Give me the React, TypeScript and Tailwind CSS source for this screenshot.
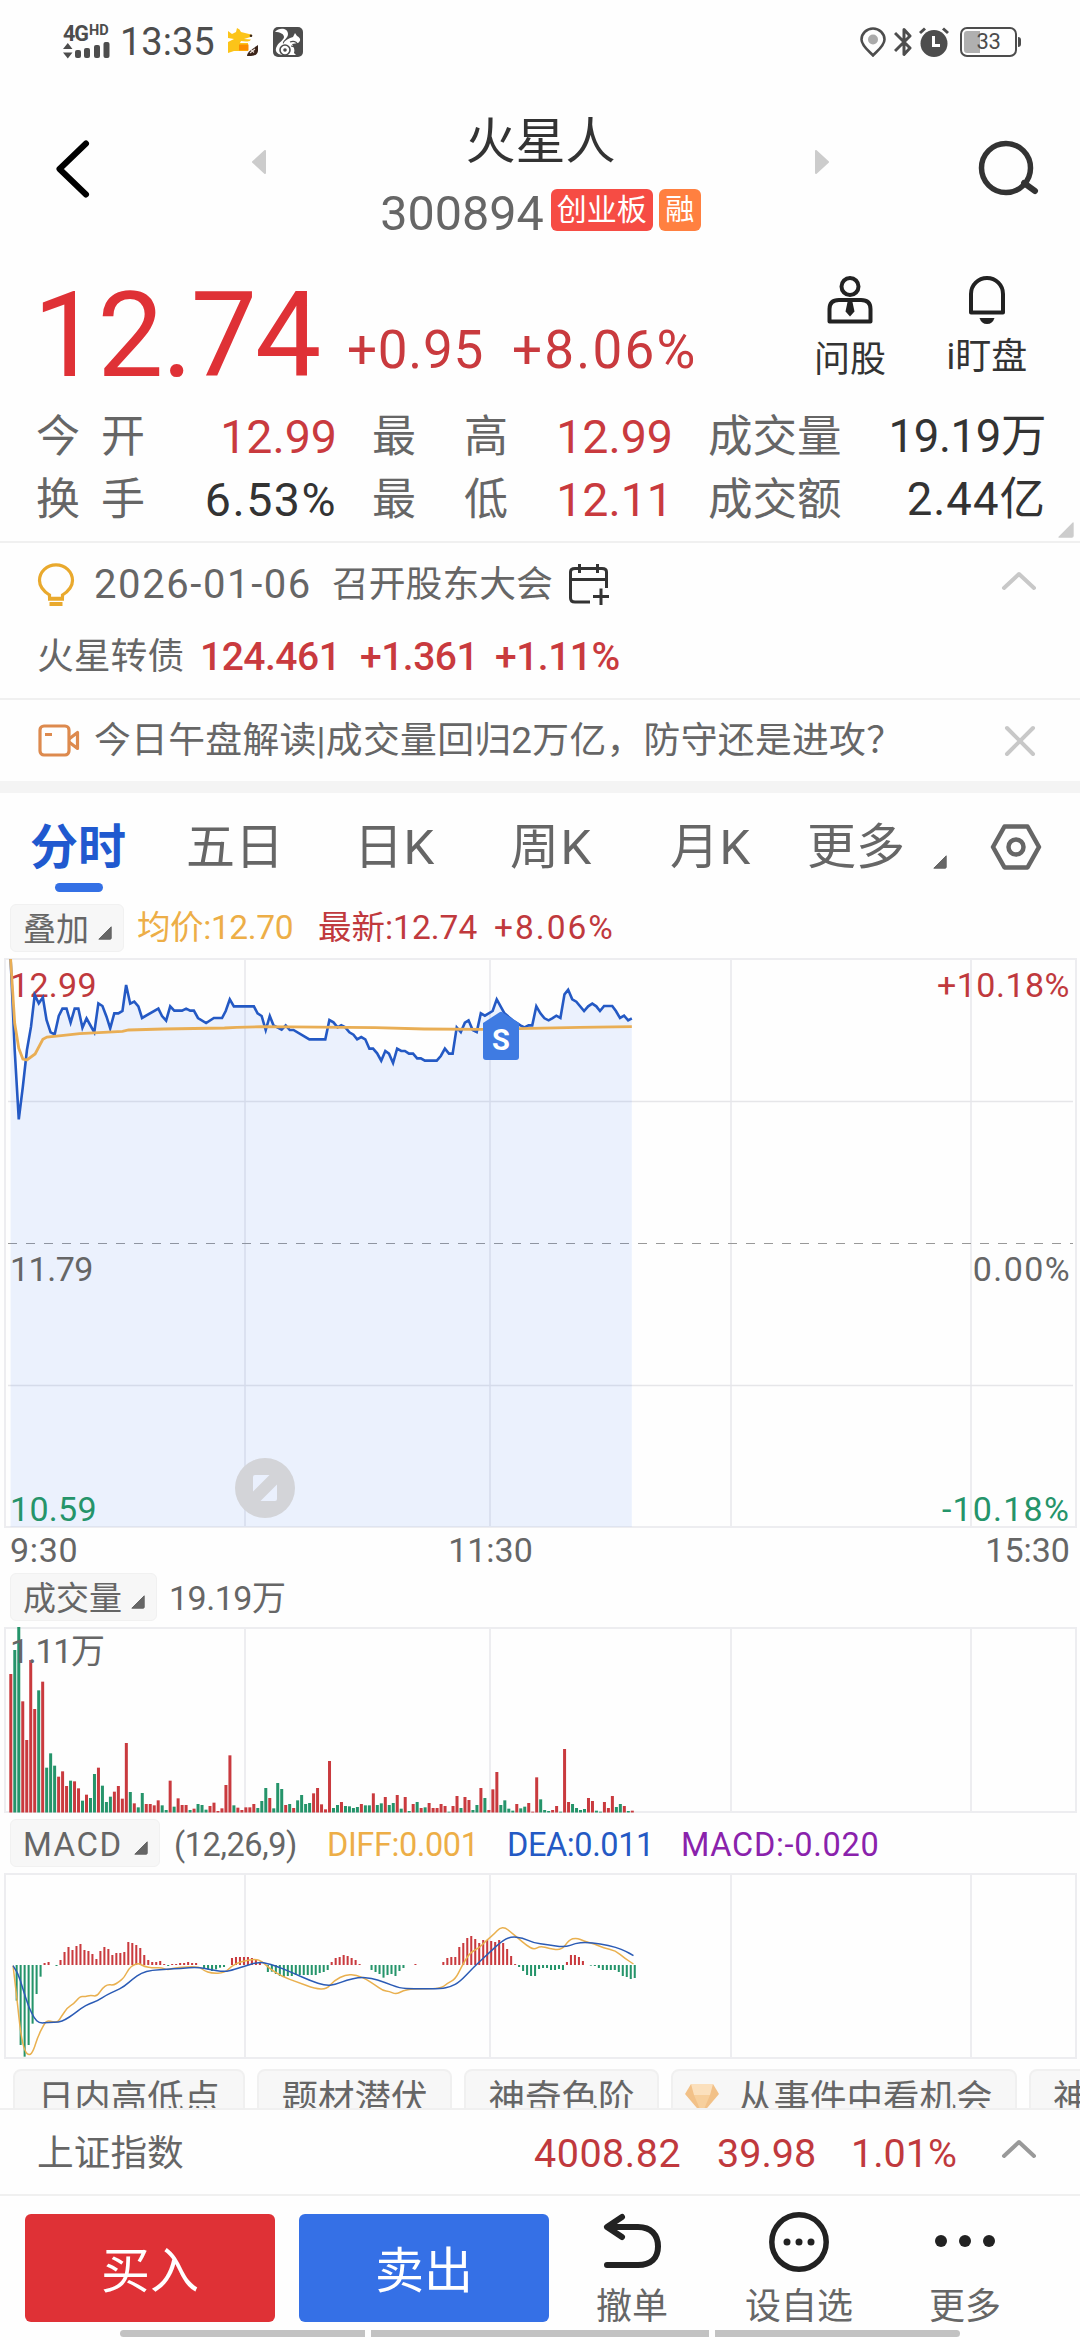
import React from "react";

const RED = "#c93a3e";
const GREEN = "#25946a";
const GRID = "#ededf0";

/* One-minute price line, in the unit space of the plot (2.45 x 3 per pixel). */
const PRICE =
  "26,57 36,330 46,538 56,440 66,330 76,260 85,165 95,190 105,172 114,240 124,277 134,283 144,228 153,206 163,206 173,248 183,206 192,206 202,263 212,235 221,255 231,277 241,190 251,198 261,230 270,265 280,220 290,220 300,213 309,135 319,191 329,185 339,199 348,234 388,206 397,228 407,242 417,199 427,212 446,212 456,206 466,212 475,212 485,234 505,249 524,234 544,234 553,213 563,178 573,199 622,199 631,220 641,228 651,270 661,228 670,256 690,269 700,256 710,270 719,270 758,298 797,298 807,240 817,247 827,262 836,256 846,262 856,277 866,284 875,298 885,291 895,298 905,326 914,326 924,340 934,362 944,333 953,341 963,369 973,326 983,333 992,333 1002,341 1012,341 1022,355 1031,355 1041,362 1070,362 1080,348 1090,326 1100,341 1109,341 1119,262 1129,276 1139,248 1148,241 1158,270 1168,276 1178,220 1188,227 1207,213 1217,178 1236,220 1256,241 1275,256 1285,262 1295,256 1304,256 1314,199 1324,220 1334,235 1344,241 1353,235 1363,227 1373,234 1383,163 1392,149 1402,178 1412,185 1431,213 1441,199 1451,191 1461,199 1470,213 1480,198 1500,198 1509,213 1519,234 1529,227 1539,241 1548,235";

const AVERAGE =
  "26,57 36,250 46,325 56,357 66,360 86,342 105,298 115,291 150,287 195,281 300,274 315,270 400,267 550,264 580,262 640,260 920,263 1040,267 1180,268 1300,265 1420,262 1548,260";

/* Bar tops of the volume plot, base line at 578; a leading minus marks a falling minute. */
const VOLUME = [
  162, -90, -20, 244, 360, 120, 267, -211, 185, -443, -400, -437, 470, 454, 498, -482, 484, 505, -542, 524,
  -534, -462, 443, -497, -546, -530, 515, 498, 536, 369, -516, 550, -562, -519, 552, 552, 556, 541, -556, -570,
  482, -560, 535, 555, 555, -570, 566, -552, -555, -569, 558, 548, 573, 565, 495, 406, -556, 563, 570, 562,
  562, 552, -564, -543, -504, 534, -565, -489, -507, 555, -552, 564, -541, -525, -552, -549, 520, 504, 553, 568,
  423, -564, -555, 546, -558, -559, -564, -561, 552, -556, -556, 520, -555, -550, 531, -555, -549, 525, -566, 531,
  -573, 552, -546, 564, -562, 549, 564, 564, 552, 558, -575, 558, 528, -564, 531, 540, -570, -555, 504, -534,
  570, 508, 456, -555, -541, -566, -572, 552, -565, -560, 549, 575, 472, -538, -570, -573, 570, 558, -575, 387,
  546, -552, -564, -570, -567, 534, 543, -572, -575, 546, 564, 528, -561, -552, 558, -573, 572,
];

/* MACD histogram ends, zero line at 315. */
const HISTOGRAM = [
  422, 555, 590, 555, 491, 402, 350, 309, 306, 315, 318, 300, 276, 261, 270, 258, 252, 270, 273, 282, 297, 273,
  261, 267, 285, 279, 279, 276, 246, 249, 255, 264, 285, 300, 306, 306, 303, 312, 318, 312, 312, 309, 309, 306,
  309, 309, 315, 324, 328, 333, 328, 323, 321, 315, 294, 291, 291, 291, 291, 294, 300, 308, 315, 336, 335, 342,
  348, 351, 348, 348, 345, 345, 345, 345, 345, 345, 339, 336, 330, 306, 294, 291, 285, 288, 294, 300, 312, 315,
  315, 330, 336, 342, 353, 345, 342, 348, 333, 324, 315, 315, 312, 315, 315, 315, 315, 315, 315, 306, 294, 291,
  291, 261, 249, 234, 228, 237, 249, 240, 240, 243, 246, 240, 249, 267, 288, 312, 321, 333, 345, 348, 348, 327,
  324, 324, 330, 330, 327, 330, 306, 285, 285, 291, 303, 315, 317, 318, 324, 330, 330, 330, 330, 336, 348, 351,
  357, 354,
];

const DIFF: [number, number][] = [
  [32, 317], [41, 410], [51, 525], [61, 575], [72, 587], [82, 572], [92, 532], [108, 492], [116, 481], [130, 486], [142, 486], [150, 470],
  [166, 442], [180, 432], [196, 409], [208, 410], [221, 406], [238, 409], [250, 385], [264, 373], [278, 376], [292, 365], [304, 353],
  [316, 325], [328, 314], [340, 310], [354, 320], [374, 324], [396, 323], [411, 330], [430, 323], [486, 319], [500, 332], [518, 340],
  [550, 339], [568, 318], [590, 304], [626, 297], [642, 304], [660, 325], [690, 349], [730, 367], [772, 386], [800, 388], [818, 362],
  [848, 343], [874, 346], [896, 357], [918, 374], [938, 392], [954, 394], [970, 403], [988, 392], [1010, 387], [1080, 386], [1096, 370],
  [1116, 357], [1130, 322], [1150, 279], [1174, 264], [1190, 243], [1212, 221], [1224, 204], [1238, 203], [1252, 217], [1270, 235],
  [1290, 256], [1308, 269], [1324, 258], [1346, 266], [1376, 271], [1394, 240], [1412, 233], [1432, 244], [1458, 252], [1478, 264],
  [1508, 272], [1530, 294], [1552, 312],
];
const DEA: [number, number][] = [
  [32, 317], [44, 338], [56, 386], [70, 440], [84, 475], [96, 490], [120, 487], [144, 487], [160, 479], [180, 463], [200, 444], [220, 430],
  [238, 423], [262, 404], [282, 393], [304, 380], [326, 356], [346, 339], [372, 330], [410, 328], [440, 325], [486, 321], [518, 330],
  [546, 335], [566, 332], [600, 318], [626, 309], [642, 307], [670, 315], [720, 340], [760, 362], [798, 377], [820, 374], [850, 360],
  [880, 352], [910, 354], [940, 366], [980, 385], [1010, 386], [1080, 387], [1104, 380], [1126, 366], [1160, 322], [1196, 281], [1228, 245],
  [1250, 230], [1280, 233], [1308, 249], [1340, 254], [1384, 262], [1410, 250], [1434, 247], [1470, 251], [1510, 262], [1534, 274], [1552, 287],
];

function smooth(points: [number, number][]) {
  let d = `M${points[0][0]},${points[0][1]}`;
  for (let i = 1; i < points.length - 1; i++) {
    const [x, y] = points[i];
    const [nx, ny] = points[i + 1];
    d += ` Q${x},${y} ${(x + nx) / 2},${(y + ny) / 2}`;
  }
  const last = points[points.length - 1];
  return `${d} L${last[0]},${last[1]}`;
}

function Grid({ height, rows = [] }: { height: number; rows?: number[] }) {
  return (
    <g stroke={GRID} strokeWidth="2" fill="none">
      <rect x="5" y="1" width="1071" height={height - 2} />
      {[245, 490, 731, 971].map((x) => (
        <path key={x} d={`M${x} 1V${height - 1}`} />
      ))}
      {rows.map((y) => (
        <path key={y} d={`M8 ${y}H1073`} stroke="#e6e6e9" strokeWidth="1.300" />
      ))}
    </g>
  );
}

function Corner({ size = 14, color = "#666", className = "" }: { size?: number; color?: string; className?: string }) {
  return (
    <svg className={`shrink-0 ${className}`} width={size} height={size} viewBox="0 0 14 14">
      <path d="M13.2 .8V12.2q0 1-1 1H.8z" fill={color} stroke={color} strokeWidth="1" strokeLinejoin="round" />
    </svg>
  );
}

function Chevron({ color, className = "" }: { color: string; className?: string }) {
  return (
    <svg className={`shrink-0 ${className}`} width="36" height="22" viewBox="0 0 36 22">
      <path d="M3 18 18 4 33 18" fill="none" stroke={color} strokeWidth="4" strokeLinecap="round" strokeLinejoin="round" />
    </svg>
  );
}

function StatusBar() {
  return (
    <div className="flex h-[84px] shrink-0 items-center pl-[63px] text-[#4d4d4d]">
      <div className="flex h-[34px] w-[57px] flex-col justify-between">
        <div className="flex h-[16px] items-start font-bold">
          <span className="w-[26px] text-[21.500px] leading-[18px] tracking-[-1.2px]">4G</span>
          <span className="text-[14.500px] leading-[12px]">HD</span>
        </div>
        <svg width="47" height="17" viewBox="0 0 47 17" fill="#4d4d4d">
          <path d="M0 7 4.8 1 9.5 7zM0 10.500H9.500L4.800 16.500z" />
          <rect x="12" y="8" width="6" height="8" rx="2" />
          <rect x="21" y="6" width="6" height="10" rx="2" />
          <rect x="31" y="3" width="6" height="13" rx="2" />
          <rect x="40.500" y="0" width="6" height="16" rx="2" />
        </svg>
      </div>
      <span className="w-[108px] text-[38px] leading-none">13:35</span>
      <svg className="w-[31px]" height="30" viewBox="0 0 31 30">
        <path d="M0 4 4 7 8 5 9 1Q12 2 13 5L21 7Q24 7 24 9.500L16 12 23 12.500Q22 15 18 14.500L13 14 12 16H20V24H6L0 26V15L6 12 0 11z" fill="#fcc419" />
        <path d="M11 17.500h9.500v6H11z" fill="#fb8c00" />
        <circle cx="23" cy="8.800" r="1.300" fill="#3b2415" />
        <path d="M30 18v6q-1 5-7 5h-4q0-3 4-6z" fill="#3b2419" />
        <path d="M22 26l5-4M23 22.500l3 3" stroke="#e9ddd5" strokeWidth="1.200" />
      </svg>
      <svg className="ml-[14px]" width="30" height="30" viewBox="0 0 30 30">
        <rect width="30" height="30" rx="5" fill="#4d4d4d" />
        <path d="M2 5C6 0 15 1 15 7c0 5-6 6-5 10 2-4 6-6 10-7l2-4 2 3c4 2 4 5 1 7l-6 1c2 3 3 6 2 9l2 2H9C4 27 1 24 4 19c2-4 7-6 7-9 0-3-4-5-9-5z" fill="#fff" />
        <circle cx="12" cy="23" r="5" fill="none" stroke="#4d4d4d" strokeWidth="1.600" />
        <circle cx="12" cy="23" r="1.800" fill="#4d4d4d" />
        <path d="M17 15c5-2 8 1 9 5M18 19c3 0 4 1 5 3" stroke="#4d4d4d" strokeWidth="1.200" fill="none" />
      </svg>
      <svg className="ml-[557px]" width="26" height="30" viewBox="0 0 26 30">
        <path d="M13 28.500C10 25 1.500 19 1.500 12.500a11.500 11 0 0 1 23 0C24.500 19 16 25 13 28.500z" fill="none" stroke="#4d4d4d" strokeWidth="2.600" />
        <circle cx="13" cy="12.500" r="5" fill="#aaa" />
      </svg>
      <svg className="ml-[8px]" width="18" height="30" viewBox="0 0 18 30">
        <path d="M1 6 16 21 10 27.500V2.500L16 9 1 24" fill="none" stroke="#4d4d4d" strokeWidth="3" strokeLinejoin="round" />
      </svg>
      <svg className="ml-[7px]" width="30" height="30" viewBox="0 0 30 30">
        <circle cx="15" cy="16.500" r="13.500" fill="#4d4d4d" />
        <path d="M1 6 6 1.500M24 1.500 29 6" stroke="#4d4d4d" strokeWidth="3" />
        <path d="M14.500 9v9.500H21" fill="none" stroke="#fff" strokeWidth="3" />
      </svg>
      <div className="relative ml-[11px] flex h-[30px] w-[57px] items-center justify-center rounded-[7px] border-[2.5px] border-[#4d4d4d]">
        <span className="absolute top-[1.5px] left-[1.5px] h-[22px] w-[16px] rounded-l-[3px] bg-[#b0b0b0]" />
        <span className="relative text-[22px] leading-none tracking-[-0.3px]">33</span>
      </div>
      <span className="ml-[1px] h-[10px] w-[2.5px] rounded-r bg-[#4d4d4d]" />
    </div>
  );
}

function Header() {
  return (
    <div className="flex h-[170px] shrink-0 justify-between pr-[40px] pl-[55px]">
      <svg className="mt-[55px]" width="36" height="60" viewBox="0 0 36 60">
        <path d="M31 4.500 4.500 30 31 55.500" fill="none" stroke="#000" strokeWidth="6" strokeLinecap="round" strokeLinejoin="round" />
      </svg>
      <div className="ml-[12px] flex w-[578px] justify-between">
        <svg className="mt-[66px]" width="14" height="24" viewBox="0 0 14 24">
          <path d="M13 1V23L1 12z" fill="#ccc" stroke="#ccc" strokeWidth="2" strokeLinejoin="round" />
        </svg>
        <div className="flex flex-col items-center pt-[28px]">
          <span className="h-[58px] text-[50px] leading-[61px] text-[#333]">火星人</span>
          <div className="mt-[19px] flex h-[42px] items-start">
            <span className="mr-[7px] text-[48.500px] leading-[50px] text-[#666]">300894</span>
            <span className="mr-[6px] flex h-[42px] w-[102px] items-center justify-center rounded-[6px] bg-[#f64c44] text-[30px] leading-[44px] text-white">创业板</span>
            <span className="flex h-[42px] w-[42px] items-center justify-center rounded-[6px] bg-[#ff8040] text-[29px] leading-[44px] text-white">融</span>
          </div>
        </div>
        <svg className="mt-[66px]" width="14" height="24" viewBox="0 0 14 24">
          <path d="M1 1V23L13 12z" fill="#ccc" stroke="#ccc" strokeWidth="2" strokeLinejoin="round" />
        </svg>
      </div>
      <svg className="mt-[56px]" width="62" height="58" viewBox="0 0 62 58">
        <circle cx="28" cy="28" r="24.500" fill="none" stroke="#333" strokeWidth="5.500" />
        <path d="M46 43 57 51" stroke="#333" strokeWidth="6" strokeLinecap="round" />
      </svg>
    </div>
  );
}

function Quote() {
  return (
    <div className="flex h-[287px] shrink-0 flex-col">
      <div className="flex h-[151px] items-start pl-[33px]">
        <span className="mt-[32px] w-[314px] text-[118px] leading-[100px] tracking-[-2px] text-[#df3136]">12.74</span>
        <span className="mt-[70px] w-[165px] text-[53px] leading-[52px] tracking-[.700px] text-[#c93a3e]">+0.95</span>
        <span className="mt-[70px] w-[302px] text-[53px] leading-[52px] tracking-[2.200px] text-[#c93a3e]">+8.06%</span>
        <div className="flex w-[72px] flex-col items-center text-[#333]">
          <svg className="mt-[21px]" width="48" height="50" viewBox="0 0 48 50" fill="none" stroke="#222" strokeWidth="4">
            <circle cx="24" cy="11.500" r="8.500" />
            <path d="M3.500 46.500V34Q3.500 25 13 25H35Q44.500 25 44.500 34V46.500z" strokeLinejoin="round" />
            <path d="M21.500 27h5l2 9.500-4.500 5-4.500-5z" fill="#222" stroke="none" />
          </svg>
          <span className="mt-[18px] text-[36px] leading-[34px]">问股</span>
        </div>
        <div className="ml-[56px] flex w-[90px] flex-col items-center text-[#333]">
          <svg className="mt-[21px]" width="40" height="50" viewBox="0 0 40 50">
            <path d="M4 37.500V19a16 16 0 0 1 32 0V37.500z" fill="none" stroke="#222" strokeWidth="4" strokeLinejoin="round" />
            <path d="M12.500 43h15q-2 6-7.500 6t-7.500-6z" fill="#222" />
          </svg>
          <span className="mt-[15px] text-[36px] leading-[34px] whitespace-nowrap">i盯盘</span>
        </div>
      </div>
      <StatRow a="今开" av="12.99" b="最高" bv="12.99" c="成交量" cv="19.19万" />
      <StatRow a="换手" av="6.53%" b="最低" bv="12.11" c="成交额" cv="2.44亿" dark />
      <Corner size={16} color="#ccc" className="-mt-[9px] ml-[1058px]" />
    </div>
  );
}

function StatRow({ a, av, b, bv, c, cv, dark }: { a: string; av: string; b: string; bv: string; c: string; cv: string; dark?: boolean }) {
  return (
    <div className="flex h-[63px] shrink-0 items-center pr-[34px] pl-[36px] text-[44px] leading-[62px] text-[#666]">
      <span className="flex w-[109px] justify-between"><i className="not-italic">{a[0]}</i><i className="not-italic">{a[1]}</i></span>
      <span className={`w-[192px] text-right text-[46.500px] ${dark ? "tracking-[1.500px] text-[#333]" : "text-[#c93a3e]"}`}>{av}</span>
      <span className="ml-[35px] flex w-[136px] justify-between"><i className="not-italic">{b[0]}</i><i className="not-italic">{b[1]}</i></span>
      <span className="w-[165px] text-right text-[46.500px] text-[#c93a3e]">{bv}</span>
      <span className="ml-[35px] text-[44.500px]">{c}</span>
      <span className={`ml-auto text-[45.500px] text-[#333] ${dark ? "tracking-[1px]" : "tracking-[-.400px]"}`}>{cv}</span>
    </div>
  );
}

function Events() {
  return (
    <>
      <div className="flex h-[157px] shrink-0 flex-col border-t-2 border-[#f0f0f0] text-[36.800px] text-[#666]">
        <div className="flex h-[84px] items-center pr-[43px] pl-[37px]">
          <svg width="38" height="44" viewBox="0 0 38 44" fill="none" stroke="#e9a92d" strokeWidth="3.200">
            <path d="M12.500 34.500V32C7 28.500 2.500 24 2.500 17.500a16.300 15.500 0 0 1 33 0C35.500 24 31 28.500 25.500 32v2.500" />
            <path d="M11 35.800h16M12.500 41h13" strokeWidth="4" />
          </svg>
          <span className="ml-[19px] w-[238px] text-[40px] tracking-[1.600px]">2026-01-06</span>
          <span>召开股东大会</span>
          <svg className="ml-[15px]" width="42" height="42" viewBox="0 0 42 42" fill="none" stroke="#333" strokeWidth="3">
            <path d="M22 38H7Q2.500 38 2.500 34V8Q2.500 4.500 7 4.500H34Q38.500 4.500 38.500 8V24M2.500 15.500H38.500M11.500 0V9M29.500 0V9M25 32.500H41M33 24.500V41" />
          </svg>
          <span className="flex-1" />
          <Chevron color="#c8c8c8" className="mb-[8px]" />
        </div>
        <div className="flex h-[60px] items-center pl-[37px]">
          <span className="w-[163px]">火星转债</span>
          <span className="w-[160px] text-[39px] font-medium tracking-[-0.500px] text-[#c93a3e]">124.461</span>
          <span className="w-[135px] text-[39px] font-medium tracking-[-0.500px] text-[#c93a3e]">+1.361</span>
          <span className="text-[39px] font-medium tracking-[-0.500px] text-[#c93a3e]">+1.11%</span>
        </div>
      </div>
      <div className="flex h-[83px] shrink-0 items-center border-t-2 border-[#f0f0f0] pr-[44px] pl-[38px] text-[#666]">
        <svg width="42" height="33" viewBox="0 0 42 33" fill="none" stroke="#dd8a4e" strokeWidth="3.200" strokeLinejoin="round">
          <rect x="2" y="2" width="29" height="29" rx="4" />
          <path d="M31 15 39.500 8.500V24.500L31 18M7 10.500h7" />
        </svg>
        <span className="ml-[14px] flex-1 text-[36.800px] tracking-[.300px]">今日午盘解读|成交量回归2万亿，防守还是进攻？</span>
        <svg width="32" height="32" viewBox="0 0 32 32">
          <path d="M3 3 29 29M29 3 3 29" stroke="#c8c8c8" strokeWidth="4" strokeLinecap="round" />
        </svg>
      </div>
      <div className="h-[12px] shrink-0 bg-[#f4f4f4]" />
    </>
  );
}

function Tabs() {
  return (
    <div className="flex h-[105px] shrink-0 items-start pt-[22px] pl-[30px] text-[49px] leading-[66px] whitespace-nowrap text-[#666]">
      <div className="flex w-[156px] flex-col font-bold text-[#2059cf]">
        <span className="text-[48px]">分时</span>
        <span className="mt-[2px] ml-[25px] h-[9px] w-[48px] rounded-full bg-[#3470e5]" />
      </div>
      <span className="w-[168px]">五日</span>
      <span className="w-[156px] tracking-[.5px]">日K</span>
      <span className="w-[160px] tracking-[1.500px]">周K</span>
      <span className="w-[137px] tracking-[.5px]">月K</span>
      <span className="w-[126px]">更多</span>
      <Corner className="mt-[40px]" />
      <svg className="mt-[8px] ml-[43px]" width="52" height="48" viewBox="0 0 52 48" fill="none" stroke="#666" strokeWidth="4.500">
        <path d="M14.500 3.500H37.500L49 24 37.500 44.500H14.500L3 24z" strokeLinejoin="round" />
        <circle cx="26" cy="24" r="7.500" />
      </svg>
    </div>
  );
}

function Picker({ label, className }: { label: string; className: string }) {
  return (
    <div className={`flex h-[48px] shrink-0 items-center justify-between rounded-[6px] border border-[#f1f1f1] bg-[#f7f7f7] pr-[11px] pl-[12px] text-[33px] leading-[46px] text-[#666] ${className}`}>
      <span className="pt-[3px]">{label}</span>
      <Corner className="mt-[9px]" />
    </div>
  );
}

function PriceChart() {
  return (
    <>
      <div className="flex h-[60px] shrink-0 items-center pl-[10px] text-[33.500px] leading-[48px] whitespace-nowrap">
        <Picker label="叠加" className="w-[114px]" />
        <span className="ml-[13px] w-[181px] tracking-[-.4px] text-[#edae47]">均价:12.70</span>
        <span className="w-[176px] text-[#c0393d]">最新:12.74</span>
        <span className="tracking-[2px] text-[#c0393d]">+8.06%</span>
      </div>
      <div className="relative h-[570px] shrink-0 text-[34px] leading-[34px]">
        <svg className="block" width="1080" height="570" viewBox="0 0 1080 570">
          <Grid height={570} rows={[143.5, 427.5]} />
          <path d="M8 285.500H1073" stroke="#999" strokeWidth="1.200" strokeDasharray="9 9" />
          <g transform="translate(0 -18) scale(.40816 .33333)">
            <polygon points={`26,1760 ${PRICE} 1548,1760`} fill="#3470f0" fillOpacity=".095" />
          </g>
        </svg>
        <span className="absolute top-[10px] left-[10px] tracking-[.3px] text-[#c0393d]">12.99</span>
        <span className="absolute top-[10px] right-[10px] tracking-[.5px] text-[#c0393d]">+10.18%</span>
        <span className="absolute top-[294px] left-[10px] tracking-[-.5px] text-[#666]">11.79</span>
        <span className="absolute top-[294px] right-[9px] tracking-[1.400px] text-[#666]">0.00%</span>
        <span className="absolute top-[534px] left-[10px] tracking-[.3px] text-[#25946a]">10.59</span>
        <span className="absolute top-[534px] right-[10px] tracking-[1.200px] text-[#25946a]">-10.18%</span>
        <svg className="absolute top-0 left-0" width="1080" height="570" viewBox="0 0 1080 570">
          <g transform="translate(0 -18) scale(.40816 .33333)" fill="none" strokeLinejoin="miter">
            <polyline points={PRICE} stroke="#2459c4" strokeWidth="2.600" vectorEffect="non-scaling-stroke" />
            <polyline points={AVERAGE} stroke="#e9ae55" strokeWidth="2.800" vectorEffect="non-scaling-stroke" />
          </g>
          <path d="M483 65 500 54Q501 53.500 502 54L519 65V99Q519 102 516 102H486Q483 102 483 99z" fill="#3f7be2" />
          <circle cx="265" cy="530" r="30" fill="#d3d4d8" />
          <path d="M253 519Q253 517 255 517H269.500L253 533.500zM277 541Q277 543 275 543H260.500L277 526.500z" fill="#eaf0fd" />
        </svg>
        <span className="absolute top-[65px] left-[483px] w-[36px] text-center text-[29px] font-bold text-white">S</span>
      </div>
      <div className="flex h-[45px] shrink-0 items-center justify-between pr-[10px] pl-[10px] text-[34px] text-[#666]">
        <span className="w-[120px] tracking-[.7px]">9:30</span>
        <span className="-ml-[99px]">11:30</span>
        <span className="w-[120px] text-right">15:30</span>
      </div>
    </>
  );
}

function VolumeChart() {
  return (
    <>
      <div className="flex h-[48px] shrink-0 items-center pl-[10px] text-[#666]">
        <Picker label="成交量" className="w-[147px]" />
        <span className="ml-[12px] pt-[3px] text-[34px] tracking-[-.5px]">19.19万</span>
      </div>
      <div className="relative mt-[6px] h-[186px] shrink-0">
        <svg className="block" width="1080" height="186" viewBox="0 0 1080 186">
          <Grid height={186} />
          {VOLUME.map((v, i) => {
            const top = (Math.abs(v) - 21) / 3;
            return <rect key={i} x={9.3 + i * 3.984} y={top} width="3" height={185.5 - top} fill={v < 0 ? GREEN : RED} />;
          })}
        </svg>
        <span className="absolute top-[7px] left-[10px] text-[34px] leading-[34px] tracking-[-1.300px] text-[#666]">1.11万</span>
      </div>
    </>
  );
}

function MacdChart() {
  return (
    <>
      <div className="mt-[6px] flex h-[48px] shrink-0 items-center pl-[10px] text-[32.500px] leading-[54px] whitespace-nowrap">
        <Picker label="MACD" className="w-[150px] tracking-[1.500px]" />
        <span className="ml-[14px] w-[153px] pt-[3px] tracking-[-.4px] text-[#666]">(12,26,9)</span>
        <span className="w-[180px] pt-[3px] tracking-[-.4px] text-[#edae47]">DIFF:0.001</span>
        <span className="w-[174px] pt-[3px] tracking-[-.4px] text-[#2459c4]">DEA:0.011</span>
        <span className="pt-[3px] tracking-[.700px] text-[#8a22ac]">MACD:-0.020</span>
      </div>
      <svg className="mt-[6px] block shrink-0" width="1080" height="186" viewBox="0 0 1080 186">
        <Grid height={186} />
        <g transform="translate(0 -13) scale(.40816 .33333)">
          {HISTOGRAM.map((v, i) => (
            <rect key={i} x={38.3 + i * 9.77} y={Math.min(v, 315)} width="5" height={Math.abs(v - 315)} fill={v > 315 ? GREEN : RED} />
          ))}
          <path d={smooth(DIFF)} fill="none" stroke="#e9b04f" strokeWidth="1.500" vectorEffect="non-scaling-stroke" />
          <path d={smooth(DEA)} fill="none" stroke="#2b5bb5" strokeWidth="1.500" vectorEffect="non-scaling-stroke" />
        </g>
      </svg>
    </>
  );
}

function Chips() {
  const chip = "flex h-[60px] shrink-0 items-center rounded-[8px] border-2 border-[#f0f0f0] bg-[#f7f7f7] leading-[60px]";
  return (
    <div className="flex h-[49px] shrink-0 items-start gap-[12px] overflow-hidden pt-[10px] pl-[13px] text-[36.500px] whitespace-nowrap text-[#666]">
      <span className={`${chip} w-[232px] justify-center`}>日内高低点</span>
      <span className={`${chip} w-[195px] justify-center`}>题材潜伏</span>
      <span className={`${chip} w-[195px] justify-center`}>神奇色阶</span>
      <span className={`${chip} w-[346px] pl-[12px]`}>
        <svg className="mr-[18px]" width="34" height="30" viewBox="0 0 34 30">
          <path d="M6 0H28L34 10 17 30 0 10z" fill="#f2c188" />
          <path d="M6 0H28L25 11H9z" fill="#fbe0bd" />
          <path d="M9 11H25L17 30z" fill="#f7cf9c" />
        </svg>
        从事件中看机会
      </span>
      <span className={`${chip} w-[200px] pl-[22px]`}>神奇</span>
    </div>
  );
}

function IndexRow() {
  return (
    <div className="flex h-[86px] shrink-0 items-center border-t-2 border-[#f0f0f0] pt-[3px] pr-[43px] pl-[37px] text-[39.500px] text-[#c0393d]">
      <span className="w-[497px] text-[36.700px] text-[#666]">上证指数</span>
      <span className="w-[183px] tracking-[.500px]">4008.82</span>
      <span className="w-[134px]">39.98</span>
      <span className="flex-1">1.01%</span>
      <Chevron color="#999" className="mb-[9px]" />
    </div>
  );
}

function Toolbar() {
  return (
    <div className="flex h-[146px] shrink-0 flex-col border-t-2 border-[#f0f0f0] text-[#666]">
      <div className="flex h-[134px] items-start pl-[25px] text-[36px] leading-[36px]">
        <button className="mt-[18px] mr-[24px] h-[108px] w-[250px] rounded-[6px] bg-[#df3136] text-[49px] leading-[116px] text-white">买入</button>
        <button className="mt-[18px] h-[108px] w-[250px] rounded-[6px] bg-[#3570e6] text-[49px] leading-[116px] text-white">卖出</button>
        <div className="ml-[47px] flex w-[72px] flex-col items-center pt-[15px]">
          <svg width="62" height="60" viewBox="0 0 62 60" fill="none" stroke="#222" strokeWidth="6" strokeLinecap="round" strokeLinejoin="round">
            <path d="M21 6 6 16 21 26M7 16H37C50 16 57 24 57 35.500S50 54 37 54H6" />
          </svg>
          <span className="mt-[18px]">撤单</span>
        </div>
        <div className="ml-[76px] flex w-[110px] flex-col items-center pt-[15px]">
          <svg width="62" height="62" viewBox="0 0 62 62">
            <circle cx="31" cy="31" r="27.200" fill="none" stroke="#222" strokeWidth="5.500" />
            <circle cx="19" cy="31" r="3.500" fill="#222" />
            <circle cx="31" cy="31" r="3.500" fill="#222" />
            <circle cx="43" cy="31" r="3.500" fill="#222" />
          </svg>
          <span className="mt-[16px]">设自选</span>
        </div>
        <div className="ml-[75px] flex w-[72px] flex-col items-center pt-[39px]">
          <svg width="60" height="12" viewBox="0 0 60 12" fill="#222">
            <circle cx="6" cy="6" r="6" />
            <circle cx="30" cy="6" r="6" />
            <circle cx="54" cy="6" r="6" />
          </svg>
          <span className="mt-[42px]">更多</span>
        </div>
      </div>
      <div className="flex h-[7px] gap-[6px] px-[120px]">
        <span className="w-[245px] rounded-l-full bg-[#c2c2c2]" />
        <span className="flex-1 bg-[#c2c2c2]" />
        <span className="w-[245px] rounded-r-full bg-[#c2c2c2]" />
      </div>
    </div>
  );
}

export default function App() {
  return (
    <div className="flex h-[2340px] w-[1080px] flex-col overflow-hidden bg-[#fefefe] font-[Roboto,'Noto_Sans_CJK_SC',sans-serif]">
      <StatusBar />
      <Header />
      <Quote />
      <Events />
      <Tabs />
      <PriceChart />
      <VolumeChart />
      <MacdChart />
      <Chips />
      <IndexRow />
      <Toolbar />
    </div>
  );
}
